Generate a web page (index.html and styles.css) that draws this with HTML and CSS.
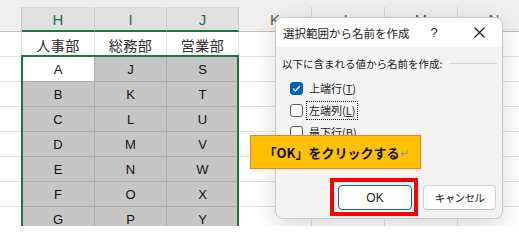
FILE: index.html
```html
<!DOCTYPE html>
<html lang="ja">
<head>
<meta charset="utf-8">
<title>選択範囲から名前を作成</title>
<link rel="stylesheet" href="styles.css">
</head>
<body>
<div class="screen">
  <div class="topstrip"></div>
  <div class="grid">
    <div class="ch corner"></div>
    <div class="ch sel">H</div>
    <div class="ch sel">I</div>
    <div class="ch sel">J</div>
    <div class="ch">K</div>
    <div class="ch">L</div>
    <div class="ch">M</div>
    <div class="ch">N</div>

    <div class="c"></div>
    <div class="c jp">人事部</div>
    <div class="c jp">総務部</div>
    <div class="c jp">営業部</div>
    <div class="c"></div><div class="c"></div><div class="c"></div><div class="c"></div>

    <div class="c"></div>
    <div class="c active">A</div>
    <div class="c s">J</div>
    <div class="c s">S</div>
    <div class="c"></div><div class="c"></div><div class="c"></div><div class="c"></div>

    <div class="c"></div>
    <div class="c s">B</div>
    <div class="c s">K</div>
    <div class="c s">T</div>
    <div class="c"></div><div class="c"></div><div class="c"></div><div class="c"></div>

    <div class="c"></div>
    <div class="c s">C</div>
    <div class="c s">L</div>
    <div class="c s">U</div>
    <div class="c"></div><div class="c"></div><div class="c"></div><div class="c"></div>

    <div class="c"></div>
    <div class="c s">D</div>
    <div class="c s">M</div>
    <div class="c s">V</div>
    <div class="c"></div><div class="c"></div><div class="c"></div><div class="c"></div>

    <div class="c"></div>
    <div class="c s">E</div>
    <div class="c s">N</div>
    <div class="c s">W</div>
    <div class="c"></div><div class="c"></div><div class="c"></div><div class="c"></div>

    <div class="c"></div>
    <div class="c s">F</div>
    <div class="c s">O</div>
    <div class="c s">X</div>
    <div class="c"></div><div class="c"></div><div class="c"></div><div class="c"></div>

    <div class="c"></div>
    <div class="c s">G</div>
    <div class="c s">P</div>
    <div class="c s">Y</div>
    <div class="c"></div><div class="c"></div><div class="c"></div><div class="c"></div>
  </div>

  <div class="selection"></div>

  <div class="dialog">
    <div class="titlebar">
      <span class="title">選択範囲から名前を作成</span>
      <span class="help">?</span>
      <svg class="close" width="11" height="11" viewBox="0 0 11 11"><path d="M0.5 0.5 L10.5 10.5 M10.5 0.5 L0.5 10.5" stroke="#1a1a1a" stroke-width="1.1" fill="none"/></svg>
    </div>
    <div class="body">
      <div class="group">
        <span class="glabel">以下に含まれる値から名前を作成:</span>
        <span class="gline"></span>
      </div>
      <div class="opt first">
        <span class="box checked"><svg width="9" height="7" viewBox="0 0 9 7"><path d="M1 3.6 L3.4 6 L8 1" stroke="#fff" stroke-width="1.3" fill="none"/></svg></span>
        <span class="olabel">上端行(<u>T</u>)</span>
      </div>
      <div class="opt">
        <span class="box"></span>
        <span class="olabel focus">左端列(<u>L</u>)</span>
      </div>
      <div class="opt">
        <span class="box"></span>
        <span class="olabel">最下行(<u>B</u>)</span>
      </div>
      <div class="buttons">
        <div class="btn primary">OK</div>
        <div class="btn cancel">キャンセル</div>
      </div>
    </div>
  </div>

  <div class="callout">「OK」をクリックする<span class="ret">↵</span></div>
  <div class="redbox"></div>
</div>
</body>
</html>
```

FILE: styles.css
```css
html, body {
  margin: 0;
  padding: 0;
  background: #ffffff;
}
body {
  width: 519px;
  height: 226px;
  overflow: hidden;
}
.screen {
  position: relative;
  width: 519px;
  height: 226px;
  overflow: hidden;
  font-family: "Liberation Sans", "Noto Sans CJK JP", sans-serif;
}
.topstrip {
  height: 7px;
  background: #efefef;
}
.grid {
  display: grid;
  grid-template-columns: 22px 73px 72px 72px 73px 73px 73px 73px;
  grid-auto-rows: 25px;
  width: 531px;
}
.ch {
  box-sizing: border-box;
  background: #efefef;
  border-right: 1px solid #d4d4d4;
  border-bottom: 1px solid #bdbdbd;
  display: flex;
  align-items: center;
  justify-content: center;
  font-size: 15px;
  color: #5a5a5a;
  padding-top: 1px;
}
.ch.corner {
  border-right-color: #c4c4c4;
}
.ch.sel {
  background: #e0e0e0;
  color: #1d6f55;
  border-right-color: #c8c8c8;
  border-bottom: 2px solid #217346;
  padding-top: 2px;
}
.c {
  box-sizing: border-box;
  border-right: 1px solid #e1e1e1;
  border-bottom: 1px solid #e1e1e1;
  display: flex;
  align-items: center;
  justify-content: center;
  font-size: 13px;
  color: #111;
  padding-top: 1px;
}
.c.jp {
  font-family: "Noto Sans CJK JP", sans-serif;
  font-size: 14px;
  color: #2a2a2a;
  letter-spacing: 0.5px;
}
.c.s {
  background: #c6c6c6;
  border-right-color: #ababab;
  border-bottom-color: #ababab;
}
.c.active {
  background: #ffffff;
  border-bottom-color: #ababab;
  border-right-color: #ababab;
}
.selection {
  position: absolute;
  left: 21px;
  top: 55px;
  width: 218px;
  height: 200px;
  box-sizing: border-box;
  border: 2px solid #217346;
  box-shadow: 1px 0 0 #ffffff;
}
.dialog {
  position: absolute;
  left: 275px;
  top: 17px;
  width: 228px;
  height: 202px;
  box-sizing: border-box;
  border: 1px solid #c9c9c9;
  border-radius: 8px;
  background: #f3f3f3;
  overflow: hidden;
  box-shadow: 0 6px 22px rgba(0, 0, 0, 0.16);
  display: flex;
  flex-direction: column;
  font-family: "Noto Sans CJK JP", sans-serif;
  color: #1a1a1a;
}
.titlebar {
  height: 29px;
  background: #ffffff;
  display: flex;
  align-items: center;
  padding: 0 0 0 7px;
  flex-shrink: 0;
}
.title {
  font-size: 11.5px;
  flex: 1;
}
.help {
  font-family: "Liberation Sans", sans-serif;
  font-size: 13px;
  width: 12px;
  margin-right: 34px;
  text-align: center;
}
.close {
  margin-right: 17px;
}
.body {
  flex: 1;
  display: flex;
  flex-direction: column;
  padding: 8px 5px 8px 6px;
}
.group {
  display: flex;
  align-items: center;
  height: 16px;
}
.glabel {
  font-size: 10.5px;
  white-space: nowrap;
}
.gline {
  flex: 1;
  height: 1px;
  background: #d6d6d6;
  margin: 0 0 0 7px;
}
.opt {
  display: flex;
  align-items: center;
  height: 13px;
  margin-top: 9px;
  padding-left: 8px;
}
.opt.first {
  margin-top: 11px;
}
.box {
  box-sizing: border-box;
  width: 13px;
  height: 13px;
  border: 1px solid #5d5d5d;
  border-radius: 3px;
  background: #ffffff;
  display: flex;
  align-items: center;
  justify-content: center;
  flex-shrink: 0;
}
.box.checked {
  background: #005fb8;
  border-color: #005fb8;
}
.olabel {
  font-size: 11px;
  margin-left: 5px;
  padding: 0 1px;
  white-space: nowrap;
  line-height: 15px;
}
.olabel u {
  text-underline-offset: 1px;
}
.olabel.focus {
  outline: 1px dotted #1a1a1a;
  outline-offset: 1px;
  margin-left: 5px;
}
.buttons {
  margin-top: auto;
  display: flex;
  justify-content: flex-end;
  gap: 11px;
  padding-right: 1px;
}
.btn {
  box-sizing: border-box;
  height: 25px;
  border-radius: 4px;
  background: #fdfdfd;
  border: 1px solid #d0d0d0;
  display: flex;
  align-items: center;
  justify-content: center;
  font-size: 11px;
}
.btn.primary {
  width: 74px;
  border-color: #0067c0;
  font-family: "Liberation Sans", sans-serif;
  font-size: 12px;
}
.btn.cancel {
  width: 73px;
  border-bottom-color: #bdbdbd;
  font-size: 10.5px;
  letter-spacing: -0.6px;
}
.callout {
  position: absolute;
  left: 250px;
  top: 135px;
  width: 171px;
  height: 34px;
  box-sizing: border-box;
  background: #ffc000;
  border: 1px solid #ed7d31;
  display: flex;
  align-items: center;
  justify-content: center;
  font-family: "Noto Sans CJK JP", sans-serif;
  font-weight: 700;
  font-size: 13px;
  color: #111;
  padding-left: 2px;
}
.ret {
  font-weight: 400;
  font-size: 11px;
  color: #9a9a9a;
  margin-left: 1px;
}
.redbox {
  position: absolute;
  left: 330px;
  top: 178px;
  width: 88px;
  height: 38px;
  box-sizing: border-box;
  border: 4px solid #ff0000;
}
```
